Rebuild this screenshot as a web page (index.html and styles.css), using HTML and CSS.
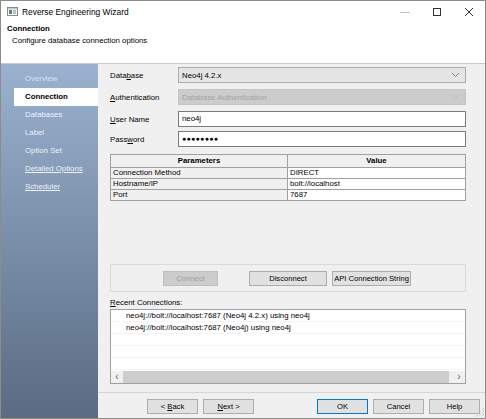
FILE: index.html
```html
<!DOCTYPE html>
<html lang="en">
<head>
  <meta charset="UTF-8">
  <title>Reverse Engineering Wizard</title>
  <link rel="stylesheet" href="styles.css">
</head>
<body>
  <div class="window">
    <!-- Title bar -->
    <div class="titlebar">
      <svg class="app-icon" width="11" height="9" viewBox="0 0 11 9">
        <rect x="0.5" y="0.5" width="10" height="8" fill="#fff" stroke="#8a8a8a"/>
        <rect x="1" y="1" width="9" height="1.5" fill="#c9c9c9"/>
        <rect x="2" y="3" width="3" height="4" fill="#3f8f6b"/>
        <rect x="6" y="3" width="3" height="4" fill="#a9c2dc"/>
      </svg>
      <span class="title">Reverse Engineering Wizard</span>
      <div class="caption-buttons">
        <span class="cap-btn">
          <svg width="10" height="10" viewBox="0 0 10 10"><path d="M0 5.5h10" stroke="#c4c4c4" stroke-width="1"/></svg>
        </span>
        <span class="cap-btn">
          <svg width="10" height="10" viewBox="0 0 10 10"><rect x="1.5" y="1.5" width="7" height="7" fill="none" stroke="#333"/></svg>
        </span>
        <span class="cap-btn">
          <svg width="10" height="10" viewBox="0 0 10 10"><path d="M1 1l8 8M9 1l-8 8" stroke="#333" stroke-width="1"/></svg>
        </span>
      </div>
    </div>

    <!-- Header -->
    <div class="header">
      <div class="header-title">Connection</div>
      <div class="header-sub">Configure database connection options</div>
    </div>

    <div class="body">
      <!-- Steps -->
      <ul class="steps">
        <li class="dim">Overview</li>
        <li class="active">Connection</li>
        <li>Databases</li>
        <li>Label</li>
        <li>Option Set</li>
        <li class="link">Detailed Options</li>
        <li class="link">Scheduler</li>
      </ul>

      <div class="main">
        <div class="content">
          <div class="field-row">
            <label>Data<u>b</u>ase</label>
            <div class="combo">
              <span>Neo4j 4.2.x</span>
              <svg width="9" height="6" viewBox="0 0 9 6"><path d="M1 1l3.5 3.5L8 1" fill="none" stroke="#808080"/></svg>
            </div>
          </div>
          <div class="field-row">
            <label><u>A</u>uthentication</label>
            <div class="combo disabled">
              <span>Database Authentication</span>
              <svg width="9" height="6" viewBox="0 0 9 6"><path d="M1 1l3.5 3.5L8 1" fill="none" stroke="#b8b8b8"/></svg>
            </div>
          </div>
          <div class="field-row">
            <label><u>U</u>ser Name</label>
            <div class="textbox">neo4j</div>
          </div>
          <div class="field-row">
            <label>Pass<u>w</u>ord</label>
            <div class="textbox password">&#9679;&#9679;&#9679;&#9679;&#9679;&#9679;&#9679;&#9679;</div>
          </div>

          <table class="params">
            <tr>
              <th class="col-name">Parameters</th>
              <th>Value</th>
            </tr>
            <tr>
              <td class="col-name">Connection Method</td>
              <td class="val">DIRECT</td>
            </tr>
            <tr>
              <td class="col-name">Hostname/IP</td>
              <td class="val">bolt://localhost</td>
            </tr>
            <tr>
              <td class="col-name">Port</td>
              <td class="val">7687</td>
            </tr>
          </table>

          <div class="actions">
            <button class="btn btn-connect" disabled>Connect</button>
            <button class="btn btn-disconnect">Disconnect</button>
            <button class="btn btn-api">API Connection String</button>
          </div>

          <div class="recent-label"><u>R</u>ecent Connections:</div>
          <div class="recent-list">
            <div class="recent-items">
              <div class="recent-item">neo4j://bolt://localhost:7687 (Neo4j 4.2.x) using neo4j</div>
              <div class="recent-item">neo4j://bolt://localhost:7687 (Neo4j) using neo4j</div>
              <div class="recent-item"></div>
              <div class="recent-item"></div>
              <div class="recent-item"></div>
            </div>
            <div class="hscroll">
              <span class="arrow">&#8249;</span>
              <span class="thumb"></span>
              <span class="arrow">&#8250;</span>
            </div>
          </div>
        </div>

        <div class="footer">
          <button class="btn nav">&lt; <u>B</u>ack</button>
          <button class="btn nav next"><u>N</u>ext &gt;</button>
          <button class="btn nav default">OK</button>
          <button class="btn nav">Cancel</button>
          <button class="btn nav">Help</button>
        </div>
      </div>
    </div>

    <svg class="grip" width="10" height="10" viewBox="0 0 10 10">
      <path d="M9 3L3 9M9 6L6 9M9 0L0 9" stroke="#b0b0b0" stroke-dasharray="1 1"/>
    </svg>
  </div>
</body>
</html>
```

FILE: styles.css
```css
body {
  margin: 0;
  font-family: "Liberation Sans", Arial, sans-serif;
  font-size: 7.8px;
  color: #000;
  background: #fff;
}
.window {
  width: 486px;
  height: 419px;
  box-sizing: border-box;
  border: 1px solid #8c8c8c;
  display: flex;
  flex-direction: column;
  position: relative;
  overflow: hidden;
  background: #fff;
}

/* title bar */
.titlebar {
  height: 21px;
  display: flex;
  align-items: center;
  padding-left: 6px;
  font-size: 8.4px;
  color: #000;
}
.app-icon {
  margin-right: 4px;
}
.title {
  flex: 1;
}
.caption-buttons {
  display: flex;
}
.cap-btn {
  width: 32px;
  height: 21px;
  display: flex;
  align-items: center;
  justify-content: center;
}

/* header */
.header {
  height: 41px;
  border-bottom: 1px solid #c9c9c9;
}
.header-title {
  font-weight: bold;
  padding-left: 6px;
  line-height: 13px;
}
.header-sub {
  padding-left: 11px;
  line-height: 11px;
}

/* body */
.body {
  flex: 1;
  display: flex;
  min-height: 0;
}
.steps {
  width: 97px;
  margin: 0;
  padding: 6px 0 0 0;
  list-style: none;
  background: linear-gradient(#9ab2cf, #5a6b82);
}
.steps li {
  height: 18px;
  line-height: 18px;
  padding-left: 24px;
  color: #eef2f7;
  white-space: nowrap;
}
.steps li.dim {
  color: #d9e2ed;
}
.steps li.link {
  text-decoration: underline;
}
.steps li.active {
  margin-left: 13px;
  padding-left: 11px;
  background: #fff;
  color: #000;
  font-weight: bold;
}

.main {
  flex: 1;
  background: #f0f0f0;
  display: flex;
  flex-direction: column;
}
.content {
  flex: 1;
  padding: 3px 19px 0 12px;
}

.field-row {
  display: flex;
  align-items: center;
  height: 16px;
  margin-bottom: 6px;
}
.field-row:nth-child(3) {
  margin-bottom: 4px;
}
.field-row label {
  width: 68px;
}
.combo {
  flex: 1;
  height: 16px;
  box-sizing: border-box;
  border: 1px solid #acacac;
  background: #e5e5e5;
  display: flex;
  align-items: center;
  justify-content: space-between;
  padding: 0 5px 0 3px;
}
.combo.disabled {
  background: #cccccc;
  border-color: #c4c4c4;
  color: #a3a3a3;
}
.textbox {
  flex: 1;
  height: 16px;
  box-sizing: border-box;
  border: 1px solid #7a7a7a;
  background: #fff;
  padding-left: 3px;
  line-height: 14px;
}
.textbox.password {
  font-size: 7px;
  letter-spacing: 0.3px;
}

/* parameters table */
.params {
  width: 100%;
  margin-top: 7px;
  border-collapse: collapse;
  border: 1px solid #a0a0a0;
}
.params th,
.params td {
  border: 1px solid #a0a0a0;
  padding: 0 2px;
  text-align: left;
  font-weight: normal;
  height: 10px;
  line-height: 10px;
}
.params th {
  text-align: center;
  font-weight: bold;
  height: 12px;
  line-height: 12px;
}
.params .col-name {
  width: 172px;
}
.params .val {
  background: #fff;
}

/* action panel */
.actions {
  margin-top: 63px;
  height: 28px;
  box-sizing: border-box;
  border: 1px solid #dadada;
  display: flex;
  align-items: center;
  padding-left: 52px;
}
.btn {
  height: 15px;
  box-sizing: border-box;
  border: 1px solid #adadad;
  background: #e1e1e1;
  font-family: inherit;
  font-size: 7.6px;
  color: #000;
  padding: 0;
  white-space: nowrap;
}
.btn-connect {
  width: 55px;
  background: #cccccc;
  border-color: #bfbfbf;
  color: #a0a0a0;
}
.btn-disconnect {
  width: 78px;
  margin-left: 31px;
}
.btn-api {
  width: 79px;
  margin-left: 5px;
}

/* recent connections */
.recent-label {
  margin-top: 4px;
  height: 13px;
  line-height: 13px;
}
.recent-list {
  height: 75px;
  box-sizing: border-box;
  border: 1px solid #a0a0a0;
  background: #fff;
  display: flex;
  flex-direction: column;
}
.recent-items {
  flex: 1;
  overflow: hidden;
}
.recent-item {
  height: 11px;
  line-height: 11px;
  padding-left: 15px;
  border-bottom: 1px solid #f4f4f4;
  white-space: nowrap;
}
.hscroll {
  height: 12px;
  background: #f0f0f0;
  display: flex;
  align-items: center;
}
.hscroll .arrow {
  width: 12px;
  text-align: center;
  color: #606060;
  font-size: 10px;
  line-height: 12px;
}
.hscroll .thumb {
  flex: 1;
  height: 12px;
  background: #cdcdcd;
  margin-right: 4px;
}

/* footer */
.footer {
  border-top: 1px solid #d5d5d5;
  margin-top: 8px;
  height: 20px;
  display: flex;
  align-items: flex-start;
  padding: 6px 5px 0 49px;
}
.btn.nav {
  width: 51px;
  margin-right: 5px;
}
.btn.nav.next {
  margin-right: 63px;
}
.btn.nav:last-child {
  margin-right: 0;
}
.btn.default {
  border-color: #0078d7;
}

.grip {
  position: absolute;
  right: 0;
  bottom: 0;
}
```
